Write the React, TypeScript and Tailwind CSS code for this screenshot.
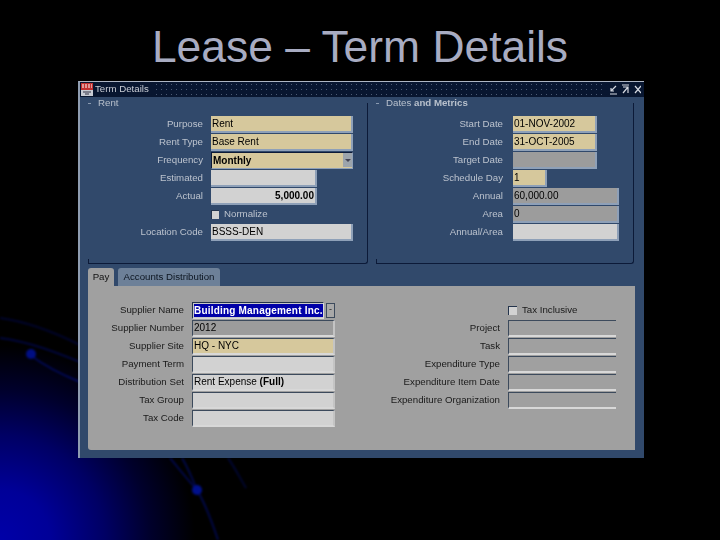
import React from 'react';

const tan = 'bg-[#d6c89c]';
const light = 'bg-[#d2d2d2]';
const grey = 'bg-[#9c9c9c]';

function Field({ w, bg, text, right, bold, dark, open }: { w: string; bg: string; text?: React.ReactNode; right?: boolean; bold?: boolean; dark?: boolean; open?: boolean }) {
  return (
    <div
      className={`${w} ${bg} h-[17px] flex items-center px-[1px] text-[10px] text-black whitespace-nowrap overflow-hidden border-b-2 ${open ? 'border-t border-l border-t-[#3c4a5c] border-l-[#3c4a5c] border-b-[#d8d8d8]' : dark ? 'border-r-2 border-t border-l border-t-[#3c4a5c] border-l-[#3c4a5c] border-b-[#d8d8d8] border-r-[#c4c4c4]' : 'border-r-2 border-b-[#8ea0b8] border-r-[#8ea0b8]'} ${right ? 'justify-end' : ''} ${bold ? 'font-bold' : ''}`}
    >
      {text}
    </div>
  );
}

function Row({ label, labelW, color, children }: { label: string; labelW: string; color: string; children: React.ReactNode }) {
  return (
    <div className="flex items-center h-[18px]">
      <div className={`${labelW} ${color} shrink-0 text-right text-[9.7px] whitespace-nowrap`}>{label}</div>
      {children}
    </div>
  );
}

function Group({ title, w, children }: { title: React.ReactNode; w: string; children: React.ReactNode }) {
  return (
    <div className={`${w} relative h-[161px] border-r border-b border-[#0c1a38] rounded-br-[3px] pt-[12px]`}>
      <div className="absolute -top-[5px] left-[10px] text-[9.7px] text-[#b8c0cc] leading-none">{title}</div>
      <div className="absolute top-0 left-0 w-[3px] border-t border-[#8a9ab0]" />
      <div className="absolute bottom-0 left-0 w-[1px] h-[4px] bg-[#0c1a38]" />
      {children}
    </div>
  );
}

const top = 'text-[#bcc3ce]';
const low = 'text-[#1a1a1a]';

export default function App() {
  return (
    <div className="relative w-[720px] h-[540px] overflow-hidden bg-black bg-[radial-gradient(circle_at_0px_540px,#0000a8_0px,#000098_50px,#000064_105px,#00002c_150px,#000000_195px)] font-['Liberation_Sans',sans-serif]">
      <svg className="absolute inset-0 blur-[0.8px]" width="720" height="540" fill="none">
        <path d="M0 318 C30 322 60 335 80 345" stroke="#00063c" strokeWidth="1.5" />
        <path d="M0 338 C30 342 55 352 80 362" stroke="#000850" strokeWidth="1.5" />
        <path d="M30 355 C45 366 60 374 80 382" stroke="#000c70" strokeWidth="1.5" />
        <circle cx="31" cy="354" r="5" fill="#000e84" />
        <path d="M170 458 C180 470 188 480 197 490 C206 505 212 522 218 540" stroke="#000a5c" strokeWidth="1.5" />
        <path d="M182 458 C188 468 193 480 197 490" stroke="#000a58" strokeWidth="1.5" />
        <path d="M228 458 C235 468 240 478 246 488" stroke="#000840" strokeWidth="1.5" />
        <circle cx="197" cy="490" r="5" fill="#00108c" />
      </svg>

      <div className="relative h-[81px] flex justify-center pt-[22px]">
        <h1 className="text-[44.4px] leading-[50px] text-[#a8acc2] whitespace-nowrap">Lease – Term Details</h1>
      </div>

      <div className="relative ml-[78px] w-[566px] h-[377px] flex flex-col bg-[#31496b] border-l-2 border-t border-l-[#8e9cb0] border-t-[#aeb6c4] blur-[0.3px]">
        <div className="h-[15px] flex items-center bg-[#081630] text-[9.7px] text-[#c8ccd4] pl-[1px] pr-[3px] shrink-0">
          <svg width="12" height="13" viewBox="0 0 12 13" className="shrink-0">
            <rect width="12" height="7" fill="#c03030" />
            <rect y="7" width="12" height="6" fill="#c8ccd4" />
            <path d="M1 2h10M1 4h10" stroke="#fff" strokeWidth="1" strokeDasharray="2 1" />
            <path d="M2 9h8M4 11h4" stroke="#334" />
          </svg>
          <span className="ml-[2px]">Term Details</span>
          <div className="flex-1 h-full mx-[5px] bg-[radial-gradient(#4c5a74_0.6px,transparent_0.9px)] bg-[length:5px_5px]" />
          <svg width="32" height="11" viewBox="0 0 32 11" fill="none" stroke="#d4d8e0" strokeWidth="1.2" className="shrink-0">
            <path d="M1 10h7M7 2 2 7M2 4v3h3" />
            <path d="M13 1h7M19 9V3h-5M19 3l-5 6" />
            <path d="M26 2l6 7M32 2l-6 7" />
          </svg>
        </div>

        <div className="flex flex-col pl-[8px] pt-[6px] flex-1">
          <div className="flex gap-[8px]">
            <Group w="w-[280px]" title="Rent">
              <Row label="Purpose" labelW="w-[115px] mr-[8px]" color={top}><Field w="w-[142px]" bg={tan} text="Rent" /></Row>
              <Row label="Rent Type" labelW="w-[115px] mr-[8px]" color={top}><Field w="w-[142px]" bg={tan} text="Base Rent" /></Row>
              <Row label="Frequency" labelW="w-[115px] mr-[8px]" color={top}>
                <div className="w-[142px] h-[17px] flex items-center justify-between bg-[#d6c89c] border border-[#0c1a38] border-b-[#8ea0b8] border-r-[#8ea0b8] text-[10px] font-bold text-black pl-[1px]">
                  Monthly
                  <span className="w-[9px] h-[14px] bg-[#9ca4ac] flex items-center justify-center">
                    <span className="border-x-[3px] border-t-[3px] border-x-transparent border-t-[#445]" />
                  </span>
                </div>
              </Row>
              <Row label="Estimated" labelW="w-[115px] mr-[8px]" color={top}><Field w="w-[106px]" bg={light} /></Row>
              <Row label="Actual" labelW="w-[115px] mr-[8px]" color={top}><Field w="w-[106px]" bg={light} text="5,000.00" right bold /></Row>
              <Row label="" labelW="w-[115px] mr-[8px]" color={top}>
                <span className="w-[8px] h-[9px] bg-[#d2d2d2] border-t border-l border-[#24344c]" />
                <span className={`ml-[5px] text-[9.7px] ${top}`}>Normalize</span>
              </Row>
              <Row label="Location Code" labelW="w-[115px] mr-[8px]" color={top}><Field w="w-[142px]" bg={light} text="BSSS-DEN" /></Row>
            </Group>
            <Group w="w-[258px]" title={<>Dates <b>and Metrics</b></>}>
              <Row label="Start Date" labelW="w-[127px] mr-[10px]" color={top}><Field w="w-[84px]" bg={tan} text="01-NOV-2002" /></Row>
              <Row label="End Date" labelW="w-[127px] mr-[10px]" color={top}><Field w="w-[84px]" bg={tan} text="31-OCT-2005" /></Row>
              <Row label="Target Date" labelW="w-[127px] mr-[10px]" color={top}><Field w="w-[84px]" bg={grey} /></Row>
              <Row label="Schedule Day" labelW="w-[127px] mr-[10px]" color={top}><Field w="w-[34px]" bg={tan} text="1" /></Row>
              <Row label="Annual" labelW="w-[127px] mr-[10px]" color={top}><Field w="w-[106px]" bg={grey} text="60,000.00" /></Row>
              <Row label="Area" labelW="w-[127px] mr-[10px]" color={top}><Field w="w-[106px]" bg={grey} text="0" /></Row>
              <Row label="Annual/Area" labelW="w-[127px] mr-[10px]" color={top}><Field w="w-[106px]" bg={light} /></Row>
            </Group>
          </div>

          <div className="flex items-end h-[22px] gap-[4px] shrink-0">
            <div className="w-[26px] h-[18px] bg-[#a0a0a0] rounded-t-[3px] text-[9.7px] text-[#111] flex items-center justify-center">Pay</div>
            <div className="w-[102px] h-[18px] bg-[#6d8098] rounded-t-[3px] text-[9.7px] text-[#0c1420] flex items-center justify-center">Accounts Distribution</div>
          </div>
          <div className="w-[547px] h-[164px] bg-[#a0a0a0] rounded-bl-[3px] flex pt-[15px]">
            <div className="w-[248px] shrink-0">
              <Row label="Supplier Name" labelW="w-[96px] mr-[8px]" color={low}>
                <div className="w-[132px] h-[17px] flex items-center border border-[#24344c] border-b-[#d8d8d8] border-r-[#d8d8d8] bg-[#c8c8c8] pl-[1px]">
                  <span className="bg-[#0000a8] text-white text-[10px] tracking-[0.2px] font-bold h-[13px] leading-[13px] whitespace-nowrap">Building Management Inc.</span>
                </div>
                <span className="ml-[2px] w-[9px] h-[15px] bg-[#a8a8a8] border border-[#3c4a5c] text-[9px] leading-[11px] text-center text-[#222]">-</span>
              </Row>
              <Row label="Supplier Number" labelW="w-[96px] mr-[8px]" color={low}><Field dark w="w-[143px]" bg={grey} text="2012" /></Row>
              <Row label="Supplier Site" labelW="w-[96px] mr-[8px]" color={low}><Field dark w="w-[143px]" bg={tan} text="HQ - NYC" /></Row>
              <Row label="Payment Term" labelW="w-[96px] mr-[8px]" color={low}><Field dark w="w-[143px]" bg={light} /></Row>
              <Row label="Distribution Set" labelW="w-[96px] mr-[8px]" color={low}><Field dark w="w-[143px]" bg={light} text={<>Rent Expense&nbsp;<b>(Full)</b></>} /></Row>
              <Row label="Tax Group" labelW="w-[96px] mr-[8px]" color={low}><Field dark w="w-[143px]" bg={light} /></Row>
              <Row label="Tax Code" labelW="w-[96px] mr-[8px]" color={low}><Field dark w="w-[143px]" bg={light} /></Row>
            </div>
            <div className="ml-[16px]">
              <Row label="" labelW="w-[148px] mr-[8px]" color={low}>
                <span className="w-[9px] h-[9px] bg-[#d2d2d2] border-t border-l border-[#24344c]" />
                <span className={`ml-[5px] text-[9.7px] ${low}`}>Tax Inclusive</span>
              </Row>
              <Row label="Project" labelW="w-[148px] mr-[8px]" color={low}><Field open w="w-[108px]" bg="bg-[#a0a0a0]" /></Row>
              <Row label="Task" labelW="w-[148px] mr-[8px]" color={low}><Field open w="w-[108px]" bg="bg-[#a0a0a0]" /></Row>
              <Row label="Expenditure Type" labelW="w-[148px] mr-[8px]" color={low}><Field open w="w-[108px]" bg="bg-[#a0a0a0]" /></Row>
              <Row label="Expenditure Item Date" labelW="w-[148px] mr-[8px]" color={low}><Field open w="w-[108px]" bg="bg-[#a0a0a0]" /></Row>
              <Row label="Expenditure Organization" labelW="w-[148px] mr-[8px]" color={low}><Field open w="w-[108px]" bg="bg-[#a0a0a0]" /></Row>
            </div>
          </div>
        </div>
      </div>
    </div>
  );
}
